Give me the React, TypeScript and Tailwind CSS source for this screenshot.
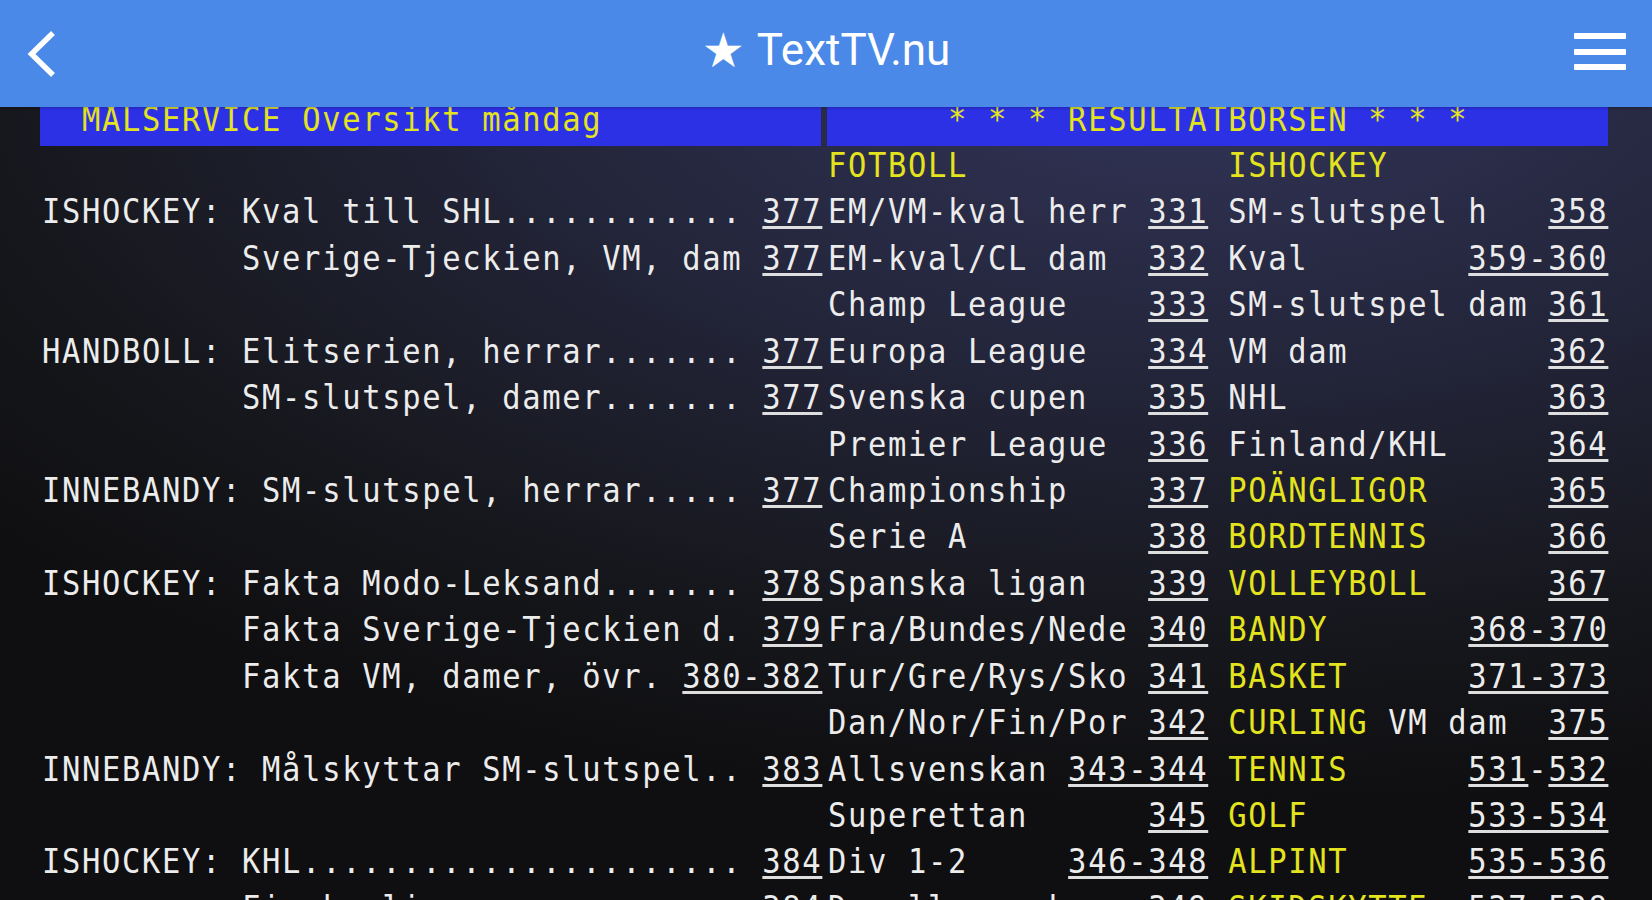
import clsx from 'clsx'

// Teletext rows, 39 columns each.
// {text} = yellow, [text] = underlined page link
const LEFT_PAGE: string[] = [
  '  {MÅLSERVICE Översikt måndag}           ',
  '',
  'ISHOCKEY: Kval till SHL............ [377]',
  '          Sverige-Tjeckien, VM, dam [377]',
  '',
  'HANDBOLL: Elitserien, herrar....... [377]',
  '          SM-slutspel, damer....... [377]',
  '',
  'INNEBANDY: SM-slutspel, herrar..... [377]',
  '',
  'ISHOCKEY: Fakta Modo-Leksand....... [378]',
  '          Fakta Sverige-Tjeckien d. [379]',
  '          Fakta VM, damer, övr. [380-382]',
  '',
  'INNEBANDY: Målskyttar SM-slutspel.. [383]',
  '',
  'ISHOCKEY: KHL...................... [384]',
  '          Finska ligan............. [384]',
]

const RIGHT_PAGE: string[] = [
  '      {* * * RESULTATBÖRSEN * * *}       ',
  '{FOTBOLL}             {ISHOCKEY}',
  'EM/VM-kval herr [331] SM-slutspel h   [358]',
  'EM-kval/CL dam  [332] Kval        [359-360]',
  'Champ League    [333] SM-slutspel dam [361]',
  'Europa League   [334] VM dam          [362]',
  'Svenska cupen   [335] NHL             [363]',
  'Premier League  [336] Finland/KHL     [364]',
  'Championship    [337] {POÄNGLIGOR}      [365]',
  'Serie A         [338] {BORDTENNIS}      [366]',
  'Spanska ligan   [339] {VOLLEYBOLL}      [367]',
  'Fra/Bundes/Nede [340] {BANDY}       [368-370]',
  'Tur/Gre/Rys/Sko [341] {BASKET}      [371-373]',
  'Dan/Nor/Fin/Por [342] {CURLING} VM dam  [375]',
  'Allsvenskan [343-344] {TENNIS}      [531]-[532]',
  'Superettan      [345] {GOLF}        [533-534]',
  'Div 1-2     [346-348] {ALPINT}      [535-536]',
  'Damallsvenskan  [349] {SKIDSKYTTE}  [537-538]',
]

type Segment = { text: string; yellow: boolean; link: boolean }

function parseLine(line: string): Segment[] {
  const out: Segment[] = []
  let cur = ''
  let yellow = false
  let link = false
  const flush = () => {
    if (cur) out.push({ text: cur, yellow, link })
    cur = ''
  }
  for (const ch of line) {
    if (ch === '{') { flush(); yellow = true }
    else if (ch === '}') { flush(); yellow = false }
    else if (ch === '[') { flush(); link = true }
    else if (ch === ']') { flush(); link = false }
    else cur += ch
  }
  flush()
  return out
}

function TeletextPage({ lines, indent }: { lines: string[]; indent: string }) {
  return (
    <div className="w-[781px] shrink-0 font-['DejaVu_Sans_Mono',monospace] text-[34.5px] tracking-[1.89px]">
      {lines.map((line, i) => (
        <div
          key={i}
          className={clsx(
            'h-[46.43px] whitespace-pre leading-[38px]',
            indent,
            i === 0 && 'bg-[#2d31e6]'
          )}
        >
          {/* teletext glyphs are narrower than DejaVu: squeeze each row */}
          <span className="inline-block origin-left scale-x-[0.883]">
            {parseLine(line).map((s, j) => (
              <span
                key={j}
                className={clsx(
                  s.yellow ? 'text-[#e3e31e]' : 'text-[#ececec]',
                  s.link && 'underline decoration-[#dedede] decoration-[3px] underline-offset-[3px]'
                )}
              >
                {s.text}
              </span>
            ))}
          </span>
        </div>
      ))}
    </div>
  )
}

function Header() {
  return (
    <header className="relative z-10 flex h-[107px] shrink-0 items-center bg-[#4a89e8] px-[26px] shadow-[0_1px_3px_rgba(0,0,0,0.25)]">
      <div className="flex w-[80px] items-center">
        <svg width="30" height="48" viewBox="0 0 30 48" className="ml-[1px]">
          <polyline
            points="26,3 4.5,24 26,45"
            fill="none"
            stroke="white"
            strokeWidth="5.5"
            strokeLinejoin="miter"
          />
        </svg>
      </div>
      <div className="mb-[7px] flex flex-1 items-center justify-center font-['Roboto','DejaVu_Sans',sans-serif] text-white">
        <span className="text-[48px] leading-none font-['DejaVu_Sans',sans-serif]">★</span>
        <span className="ml-[12px] text-[44px] leading-none">TextTV.nu</span>
      </div>
      <div className="flex w-[80px] justify-end">
        <div className="-mt-[4px] flex w-[52px] flex-col gap-[9.5px]">
          <div className="h-[6px] rounded-[1px] bg-white" />
          <div className="h-[6px] rounded-[1px] bg-white" />
          <div className="h-[6px] rounded-[1px] bg-white" />
        </div>
      </div>
    </header>
  )
}

export default function App() {
  return (
    <div className="flex h-screen w-full flex-col overflow-hidden bg-[radial-gradient(ellipse_95%_85%_at_72%_5%,#33365a_0%,#25273e_38%,#16171c_78%,#0f0f11_100%)]">
      <Header />
      <main className="-mt-[7.4px] flex gap-[6px] pl-[40px]">
        <TeletextPage lines={LEFT_PAGE} indent="pl-[2px]" />
        <TeletextPage lines={RIGHT_PAGE} indent="pl-[1px]" />
      </main>
    </div>
  )
}
